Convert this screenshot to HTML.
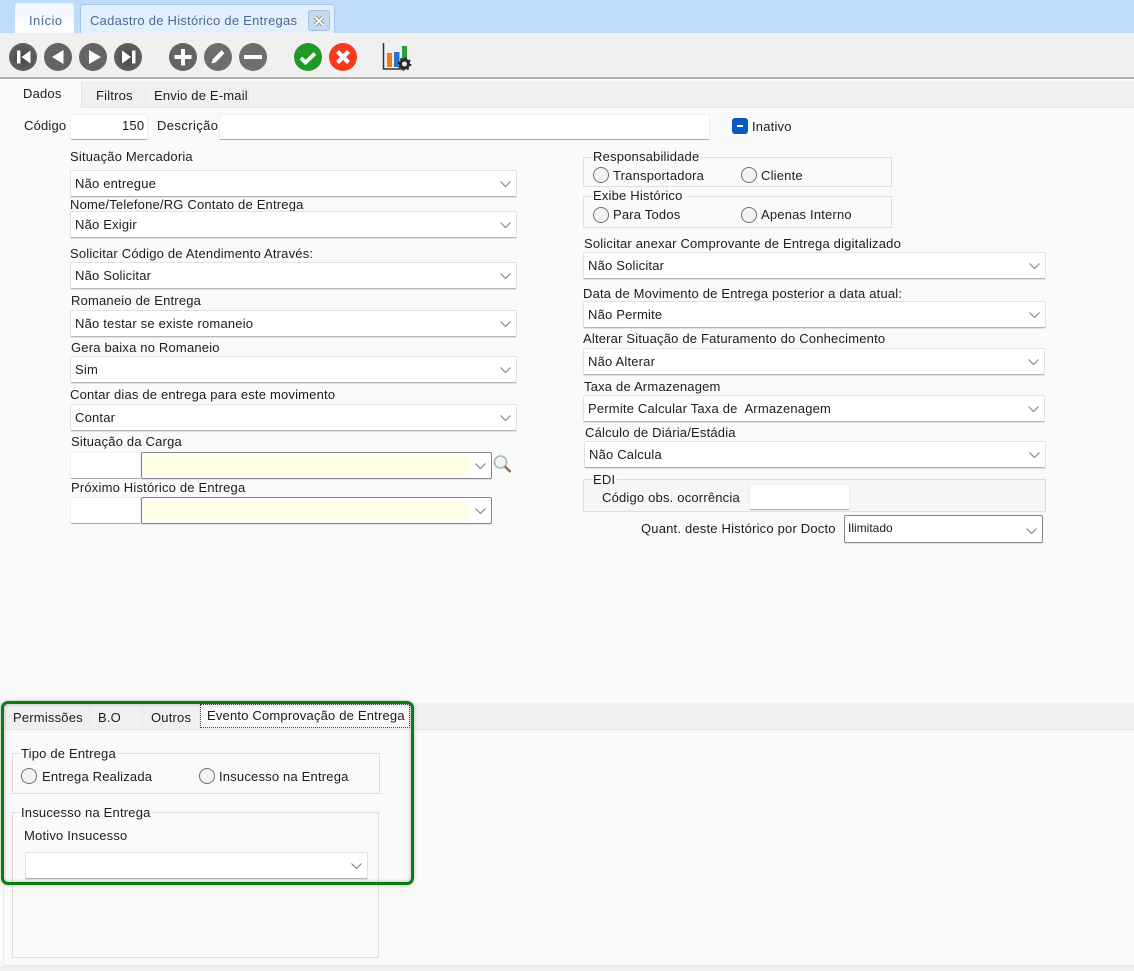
<!DOCTYPE html>
<html lang="pt"><head><meta charset="utf-8"><title>Cadastro de Histórico de Entregas</title>
<style>
html,body{margin:0;padding:0;background:#fafafa}
#w{position:absolute;left:0;top:0;width:1134px;height:971px;overflow:hidden;background:#fafafa;font-family:"Liberation Sans",sans-serif;font-size:13px;color:#1c1c1c;letter-spacing:.19px;filter:blur(.3px)}
div,span,svg{position:absolute;box-sizing:border-box}
.t{white-space:nowrap;line-height:14px;height:14px}
.c{background:#fff;border:1px solid #e2e2e2;border-bottom:1px solid #b5b5b5;border-radius:2px;line-height:26px;padding-left:4px;white-space:nowrap;z-index:2;box-shadow:0 1px 0 #e2e2e2}
.c svg{right:5px;top:10px;width:11px;height:6px}
.d{border:1px solid #858585}
.i{background:#fff;border:1px solid #f0f0f0;border-bottom:1px solid #a8a8a8;border-radius:2px;z-index:2}
.g{border:1px solid #dedede}
.r{width:16px;height:16px;border:1.5px solid #707070;border-radius:50%;background:#f3f3f3}
.y{background:#ffffe6;left:2px;top:3px;bottom:3px;width:325px}
.tab{background:#f0f0f0;border-right:1px solid #e8e8e8;border-bottom:1px solid #e8e8e8}
</style></head><body>
<div id="w">

<!-- top tabs -->
<div style="left:0;top:0;width:1134px;height:33px;background:#bfdcfd"></div>
<div style="left:15px;top:3px;width:59px;height:30px;background:linear-gradient(#eef6ff,#fff);border-radius:3px 3px 0 0;box-shadow:0 0 1px #a9cdf5"></div>
<div class="t" style="left:29px;top:14px;color:#4d6a92;letter-spacing:.4px">Início</div>
<div style="left:80px;top:4px;width:255px;height:29px;background:#e3effd;border:1px solid #a4c7f0;border-bottom:0;border-radius:3px 3px 0 0"></div>
<div class="t" style="left:90px;top:14px;color:#4d6a92;letter-spacing:.26px">Cadastro de Histórico de Entregas</div>
<div style="left:308px;top:10px;width:22px;height:21px;background:#c5d9f1;border:1px solid #a5bfdd;border-radius:3px"></div>
<svg style="left:313px;top:15px" width="12" height="12" viewBox="0 0 12 12"><path d="M2 2L10 10M10 2L2 10" stroke="#8e8e70" stroke-width="4"/><path d="M2 2L10 10M10 2L2 10" stroke="#fff" stroke-width="2"/></svg>

<!-- toolbar -->
<div style="left:0;top:33px;width:1134px;height:46px;background:#f0f0f0;border-bottom:2px solid #b0b0b0"></div>
<svg style="left:0;top:33px" width="430" height="46" viewBox="0 0 430 46">
<defs><radialGradient id="k" cx=".5" cy=".5" r=".6"><stop offset="0" stop-color="#444"/><stop offset="1" stop-color="#666"/></radialGradient></defs>
<circle cx="23" cy="24" r="14" fill="url(#k)"/><path d="M17 17.500h3.500v13H17zM21.500 24l9-6.500v13z" fill="#fff"/>
<circle cx="58" cy="24" r="14" fill="#646464"/><path d="M63.500 17v14L52 24z" fill="#fff"/>
<circle cx="93" cy="24" r="14" fill="#646464"/><path d="M89 17v14l12-7z" fill="#fff"/>
<circle cx="128" cy="24" r="14" fill="url(#k)"/><path d="M122 17.500l9 6.500-9 6.500zM132 17.500h3.500v13H132z" fill="#fff"/>
<circle cx="183" cy="24" r="14" fill="#646464"/><path d="M181 16h4v6h6.500v4H185v6.500h-4V26h-6.500v-4h6.500z" fill="#fff"/>
<circle cx="218" cy="24" r="14" fill="#6e6e6e"/><path d="M211.500 30.500l1.300-4.300 8.700-9 3 3-8.700 9z" fill="#fff"/>
<circle cx="253" cy="24" r="14" fill="#6e6e6e"/><rect x="244" y="22" width="18" height="4" fill="#fff"/>
<circle cx="308" cy="24" r="14" fill="#1f9a26"/><path d="M301 25l4.500 4.500 9.500-9" fill="none" stroke="#fff" stroke-width="3.800"/>
<circle cx="343" cy="24" r="14" fill="#f8391c"/><path d="M337.500 18.500l11 11M348.500 18.500l-11 11" fill="none" stroke="#fff" stroke-width="4.200"/>
<path d="M383.500 10v26h21" fill="none" stroke="#333" stroke-width="1.500"/>
<rect x="387" y="20" width="5" height="14" fill="#f47a14"/><rect x="394" y="19" width="5.500" height="15" fill="#2f6fd0"/><rect x="402" y="13" width="5" height="16" fill="#2f9e3a"/>
<circle cx="404.500" cy="31" r="4" fill="#f0f0f0" stroke="#2b2b2b" stroke-width="3"/><circle cx="404.500" cy="31" r="6" fill="none" stroke="#2b2b2b" stroke-width="1.800" stroke-dasharray="2 2.700"/>
</svg>

<!-- main tabs -->
<div style="left:0;top:81px;width:1134px;height:27px;background:#f0f0f0;border-bottom:1px solid #e8e8e8"></div>
<div style="left:0;top:81px;width:82px;height:27px;background:#fafafa;border-right:1px solid #e4e4e4"></div>
<div class="t" style="left:23px;top:87px">Dados</div>
<div class="tab" style="left:82px;top:84px;width:64px;height:24px"></div>
<div class="t" style="left:96px;top:89px">Filtros</div>
<div class="tab" style="left:146px;top:84px;width:103px;height:24px"></div>
<div class="t" style="left:154px;top:89px">Envio de E-mail</div>

<!-- header row -->
<div class="t" style="left:24px;top:119px">Código</div>
<div class="i" style="left:70px;top:114px;width:78px;height:26px"></div>
<div class="t" style="left:122px;top:119px;z-index:3">150</div>
<div class="t" style="left:157px;top:119px;letter-spacing:.4px">Descrição</div>
<div class="i" style="left:219px;top:114px;width:491px;height:26px"></div>
<div style="left:732px;top:118px;width:16px;height:16px;background:#0a5bc0;border-radius:3px"></div>
<div style="left:737px;top:125px;width:6px;height:2px;background:#fff"></div>
<div class="t" style="left:752px;top:120px">Inativo</div>

<!-- left column -->
<div class="t" style="left:70px;top:150px">Situação Mercadoria</div>
<div class="c" style="left:70px;top:170px;width:447px;height:27px">Não entregue<svg viewBox="0 0 11 6"><path d="M.5.5l5 5 5-5" fill="none" stroke="#808080" stroke-width="1.100"/></svg></div>
<div class="t" style="left:70px;top:198px">Nome/Telefone/RG Contato de Entrega</div>
<div class="c" style="left:70px;top:211px;width:447px;height:27px">Não Exigir<svg viewBox="0 0 11 6"><path d="M.5.5l5 5 5-5" fill="none" stroke="#808080" stroke-width="1.100"/></svg></div>
<div class="t" style="left:70px;top:247px">Solicitar Código de Atendimento Através:</div>
<div class="c" style="left:70px;top:262px;width:447px;height:27px">Não Solicitar<svg viewBox="0 0 11 6"><path d="M.5.5l5 5 5-5" fill="none" stroke="#808080" stroke-width="1.100"/></svg></div>
<div class="t" style="left:71px;top:294px">Romaneio de Entrega</div>
<div class="c" style="left:70px;top:310px;width:447px;height:27px">Não testar se existe romaneio<svg viewBox="0 0 11 6"><path d="M.5.5l5 5 5-5" fill="none" stroke="#808080" stroke-width="1.100"/></svg></div>
<div class="t" style="left:71px;top:341px">Gera baixa no Romaneio</div>
<div class="c" style="left:70px;top:356px;width:447px;height:27px">Sim<svg viewBox="0 0 11 6"><path d="M.5.5l5 5 5-5" fill="none" stroke="#808080" stroke-width="1.100"/></svg></div>
<div class="t" style="left:70px;top:388px">Contar dias de entrega para este movimento</div>
<div class="c" style="left:70px;top:404px;width:447px;height:27px">Contar<svg viewBox="0 0 11 6"><path d="M.5.5l5 5 5-5" fill="none" stroke="#808080" stroke-width="1.100"/></svg></div>

<div class="t" style="left:71px;top:435px">Situação da Carga</div>
<div class="i" style="left:70px;top:452px;width:71px;height:27px"></div>
<div class="c d" style="left:141px;top:452px;width:351px;height:27px;padding:0"><div class="y"></div><svg viewBox="0 0 11 6"><path d="M.5.5l5 5 5-5" fill="none" stroke="#808080" stroke-width="1.100"/></svg></div>
<svg style="left:492px;top:454px" width="21" height="20" viewBox="0 0 21 20"><circle cx="8.500" cy="8" r="6" fill="#f0f5f5" stroke="#a5b3b3" stroke-width="1.500"/><path d="M13 12.500L18.500 18" stroke="#9a6a3a" stroke-width="2.500"/></svg>
<div class="t" style="left:71px;top:481px">Próximo Histórico de Entrega</div>
<div class="i" style="left:70px;top:497px;width:71px;height:27px"></div>
<div class="c d" style="left:141px;top:497px;width:351px;height:27px;padding:0"><div class="y"></div><svg viewBox="0 0 11 6"><path d="M.5.5l5 5 5-5" fill="none" stroke="#808080" stroke-width="1.100"/></svg></div>

<!-- right column -->
<div class="g" style="left:583px;top:157px;width:309px;height:30px"></div>
<div class="t" style="left:593px;top:150px;background:#fafafa;padding-right:1px">Responsabilidade</div>
<div class="r" style="left:593px;top:167px"></div><div class="t" style="left:613px;top:169px">Transportadora</div>
<div class="r" style="left:741px;top:167px"></div><div class="t" style="left:761px;top:169px">Cliente</div>
<div class="g" style="left:583px;top:196px;width:309px;height:32px"></div>
<div class="t" style="left:593px;top:189px;background:#fafafa;padding-right:4px">Exibe Histórico</div>
<div class="r" style="left:593px;top:207px"></div><div class="t" style="left:613px;top:208px">Para Todos</div>
<div class="r" style="left:741px;top:207px"></div><div class="t" style="left:761px;top:208px">Apenas Interno</div>

<div class="t" style="left:584px;top:237px">Solicitar anexar Comprovante de Entrega digitalizado</div>
<div class="c" style="left:583px;top:252px;width:463px;height:27px">Não Solicitar<svg viewBox="0 0 11 6"><path d="M.5.5l5 5 5-5" fill="none" stroke="#808080" stroke-width="1.100"/></svg></div>
<div class="t" style="left:583px;top:287px">Data de Movimento de Entrega posterior a data atual:</div>
<div class="c" style="left:583px;top:301px;width:463px;height:27px">Não Permite<svg viewBox="0 0 11 6"><path d="M.5.5l5 5 5-5" fill="none" stroke="#808080" stroke-width="1.100"/></svg></div>
<div class="t" style="left:583px;top:332px">Alterar Situação de Faturamento do Conhecimento</div>
<div class="c" style="left:583px;top:348px;width:462px;height:27px">Não Alterar<svg viewBox="0 0 11 6"><path d="M.5.5l5 5 5-5" fill="none" stroke="#808080" stroke-width="1.100"/></svg></div>
<div class="t" style="left:584px;top:380px">Taxa de Armazenagem</div>
<div class="c" style="left:583px;top:395px;width:462px;height:27px;white-space:pre">Permite Calcular Taxa de  Armazenagem<svg viewBox="0 0 11 6"><path d="M.5.5l5 5 5-5" fill="none" stroke="#808080" stroke-width="1.100"/></svg></div>
<div class="t" style="left:585px;top:426px">Cálculo de Diária/Estádia</div>
<div class="c" style="left:584px;top:441px;width:462px;height:27px">Não Calcula<svg viewBox="0 0 11 6"><path d="M.5.5l5 5 5-5" fill="none" stroke="#808080" stroke-width="1.100"/></svg></div>

<div class="g" style="left:583px;top:479px;width:463px;height:33px;background:#f6f6f6"></div>
<div class="t" style="left:593px;top:473px;background:linear-gradient(#fafafa 50%,#f6f6f6 50%);padding-right:2px">EDI</div>
<div class="t" style="left:602px;top:491px">Código obs. ocorrência</div>
<div class="i" style="left:749px;top:484px;width:101px;height:26px"></div>
<div class="t" style="left:641px;top:522px">Quant. deste Histórico por Docto</div>
<div class="c d" style="left:844px;top:515px;width:199px;height:28px;font-size:12px;letter-spacing:0;line-height:24px;padding-left:3px">Ilimitado<svg viewBox="0 0 11 6" style="top:12px"><path d="M.5.5l5 5 5-5" fill="none" stroke="#808080" stroke-width="1.100"/></svg></div>

<!-- bottom section -->
<div style="left:0;top:703px;width:1134px;height:27px;background:#f0f0f0;border-bottom:1px solid #e8e8e8"></div>
<div class="tab" style="left:4px;top:703px;width:86px;height:27px"></div>
<div class="t" style="left:13px;top:711px">Permissões</div>
<div class="tab" style="left:90px;top:703px;width:53px;height:27px"></div>
<div class="t" style="left:98px;top:711px">B.O</div>
<div class="tab" style="left:143px;top:703px;width:57px;height:27px"></div>
<div class="t" style="left:151px;top:711px">Outros</div>
<div style="left:200px;top:704px;width:210px;height:24px;background:#fafafa;border:1px dotted #444"></div>
<div class="t" style="left:207px;top:709px">Evento Comprovação de Entrega</div>

<div style="left:3px;top:730px;width:1131px;height:236px;border-left:1px solid #e8e8e8;border-bottom:1px solid #e8e8e8"></div>
<div style="left:0;top:966px;width:1134px;height:5px;background:#f0f0f0"></div>

<div class="g" style="left:12px;top:753px;width:368px;height:41px"></div>
<div class="t" style="left:21px;top:747px;background:#fafafa;padding-right:1px">Tipo de Entrega</div>
<div class="r" style="left:21px;top:768px"></div><div class="t" style="left:42px;top:770px">Entrega Realizada</div>
<div class="r" style="left:199px;top:768px"></div><div class="t" style="left:219px;top:770px">Insucesso na Entrega</div>

<div class="g" style="left:12px;top:812px;width:367px;height:146px"></div>
<div class="t" style="left:21px;top:806px;background:#fafafa;padding-right:1px">Insucesso na Entrega</div>
<div class="t" style="left:24px;top:829px">Motivo Insucesso</div>
<div class="c" style="left:25px;top:852px;width:343px;height:27px"><svg viewBox="0 0 11 6"><path d="M.5.5l5 5 5-5" fill="none" stroke="#808080" stroke-width="1.100"/></svg></div>

<div style="left:1px;top:701px;width:413px;height:184px;border:3px solid #0b7d0f;border-radius:7px;z-index:5;box-shadow:0 0 4px rgba(0,0,0,.25),inset 0 0 4px rgba(0,0,0,.25)"></div>
</div>
</body></html>
